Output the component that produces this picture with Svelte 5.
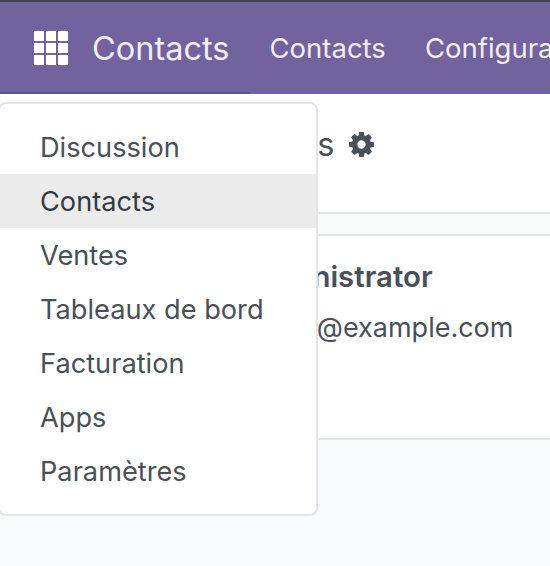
<script>
  const apps = ['Discussion', 'Contacts', 'Ventes', 'Tableaux de bord', 'Facturation', 'Apps', 'Paramètres'];
  const active = 'Contacts';
</script>

<div class="page">
  <header class="navbar">
    <button class="apps-toggle" aria-label="Applications">
      <svg viewBox="0 0 34 34" width="34" height="34">
        {#each [0, 12, 24] as y}
          {#each [0, 12, 24] as x}
            <rect {x} {y} width="10" height="10" fill="#fff" />
          {/each}
        {/each}
      </svg>
    </button>
    <span class="brand">Contacts</span>
    <nav class="menu">
      <span>Contacts</span>
      <span>Configuration</span>
    </nav>
    <span class="underline"></span>
  </header>

  <section class="control">
    <span class="title">Contacts</span>
    <svg class="gear" viewBox="0 0 1536 1536" width="25" height="25">
      <path fill="#495057" d="M1024 768q0-106-75-181t-181-75-181 75-75 181 75 181 181 75 181-75 75-181zm512-109v222q0 12-8 23t-20 13l-185 28q-19 54-39 91 35 50 107 138 10 12 10 25t-9 23q-27 37-99 108t-94 71q-12 0-26-9l-138-108q-44 23-91 38-16 136-29 186-7 28-36 28h-222q-14 0-24.500-8.500t-11.500-21.500l-28-184q-49-16-90-37l-141 107q-10 9-25 9-14 0-25-11-126-114-165-168-7-10-7-23 0-12 8-23 15-21 51-66.500t54-70.500q-27-50-41-99l-183-27q-13-2-21-12.500t-8-23.500v-222q0-12 8-23t19-13l186-28q14-46 39-92-40-57-107-138-10-12-10-24 0-10 9-23 26-36 98.500-107.500t94.500-71.500q13 0 26 10l138 107q44-23 91-38 16-136 29-186 7-28 36-28h222q14 0 24.500 8.500t11.500 21.500l28 184q49 16 90 37l142-107q9-9 24-9 13 0 25 10 129 119 165 170 7 8 7 22 0 12-8 23-15 21-51 66.500t-54 70.500q26 50 41 98l183 28q13 2 21 12.500t8 23.500z" />
    </svg>
  </section>

  <div class="band"></div>

  <article class="card">
    <div class="name">Administrator</div>
    <div class="mail">admin@example.com</div>
  </article>

  <div class="dropdown">
    {#each apps as app}
      <div class="item" class:active={app === active}>{app}</div>
    {/each}
  </div>
</div>

<style>
  :global(body) {
    margin: 0;
  }
  .page {
    position: relative;
    width: 550px;
    height: 566px;
    overflow: hidden;
    background: #f9fafb;
    font-family: Inter, "Noto Sans", sans-serif;
    color: #495057;
  }
  .navbar {
    position: relative;
    display: flex;
    align-items: center;
    box-sizing: border-box;
    height: 94px;
    padding-left: 34px;
    background: #71639e;
    border-top: 2px solid #454449;
    color: #fff;
    white-space: nowrap;
  }
  .underline {
    position: absolute;
    left: 0;
    bottom: 0;
    width: 250px;
    height: 2px;
    background: #5f5488;
  }
  .apps-toggle {
    display: flex;
    padding: 0;
    border: 0;
    background: none;
  }
  .brand {
    margin-left: 24px;
    font-size: 32.5px;
    color: #f1eefa;
  }
  .menu {
    display: flex;
    gap: 39px;
    margin-left: 40px;
    font-size: 27.5px;
    color: #f1eefa;
  }
  .control {
    display: flex;
    align-items: center;
    box-sizing: border-box;
    height: 120px;
    padding: 0 0 18px 197px;
    background: #fff;
    border-bottom: 2px solid #e3e5e8;
  }
  .title {
    font-size: 32.5px;
    color: #495057;
  }
  .gear {
    margin-left: 14px;
  }
  .band {
    height: 20px;
  }
  .card {
    box-sizing: border-box;
    height: 206px;
    padding: 23px 0 0 239px;
    background: #fff;
    border-top: 2px solid #e3e5e8;
    border-bottom: 2px solid #e3e5e8;
    white-space: nowrap;
  }
  .name {
    font-size: 29.4px;
    font-weight: 600;
  }
  .mail {
    margin-top: 17px;
    font-size: 27px;
  }
  .dropdown {
    position: absolute;
    top: 102px;
    left: -2px;
    box-sizing: border-box;
    width: 320px;
    padding: 16px 0;
    background: #fff;
    border: 2px solid #e3e5e8;
    border-radius: 8px;
  }
  .item {
    height: 54px;
    line-height: 55px;
    padding-left: 40px;
    font-size: 27.2px;
    color: #495057;
    white-space: nowrap;
  }
  .item.active {
    background: #ebebeb;
    color: #343a40;
  }
</style>
